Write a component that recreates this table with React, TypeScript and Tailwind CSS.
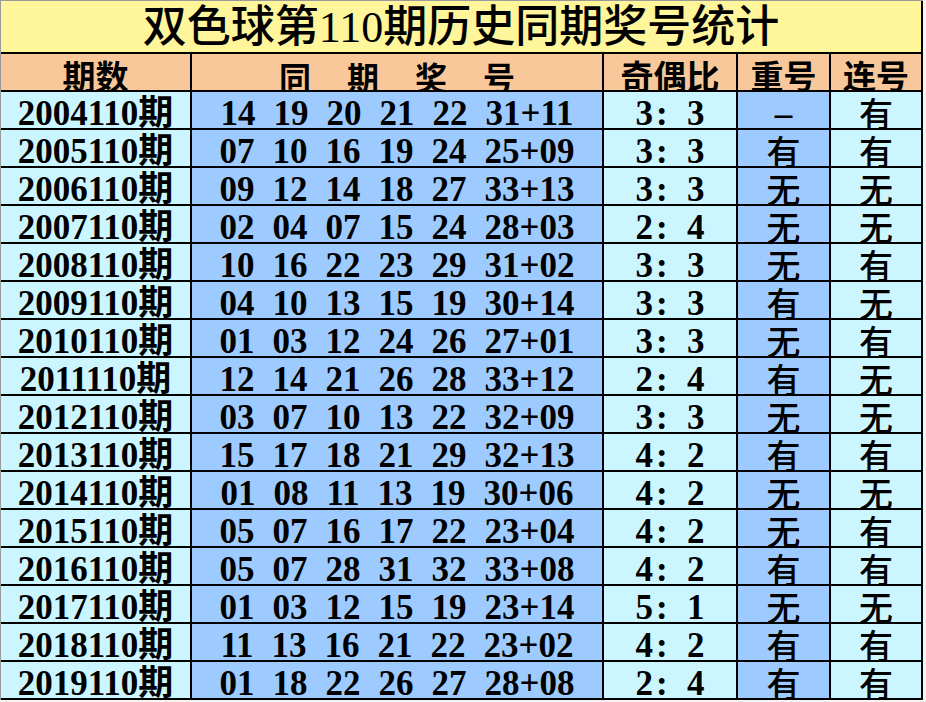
import React from "react";

const rows: [string, string, string, string, string][] = [
  ["2004110期", "14 19 20 21 22 31+11", "3：3", "–", "有"],
  ["2005110期", "07 10 16 19 24 25+09", "3：3", "有", "有"],
  ["2006110期", "09 12 14 18 27 33+13", "3：3", "无", "无"],
  ["2007110期", "02 04 07 15 24 28+03", "2：4", "无", "无"],
  ["2008110期", "10 16 22 23 29 31+02", "3：3", "无", "有"],
  ["2009110期", "04 10 13 15 19 30+14", "3：3", "有", "无"],
  ["2010110期", "01 03 12 24 26 27+01", "3：3", "无", "有"],
  ["2011110期", "12 14 21 26 28 33+12", "2：4", "有", "无"],
  ["2012110期", "03 07 10 13 22 32+09", "3：3", "无", "无"],
  ["2013110期", "15 17 18 21 29 32+13", "4：2", "有", "有"],
  ["2014110期", "01 08 11 13 19 30+06", "4：2", "无", "无"],
  ["2015110期", "05 07 16 17 22 23+04", "4：2", "无", "有"],
  ["2016110期", "05 07 28 31 32 33+08", "4：2", "有", "有"],
  ["2017110期", "01 03 12 15 19 23+14", "5：1", "无", "无"],
  ["2018110期", "11 13 16 21 22 23+02", "4：2", "有", "有"],
  ["2019110期", "01 18 22 26 27 28+08", "2：4", "有", "有"],
];

const font = "font-['Liberation_Serif','Noto_Sans_CJK_SC',serif]";
const cjk = "font-['Noto_Sans_CJK_SC',sans-serif]";

function Ratio({ v }: { v: string }) {
  const [a, b] = v.split("：");
  return (
    <span className="flex items-center">
      <span>{a}</span>
      <span className="inline-block w-[34px] pl-[3px] text-left">:</span>
      <span>{b}</span>
    </span>
  );
}

export default function App() {
  return (
    <div className="w-[926px] h-[702px] overflow-hidden bg-[#f4f4f4]">
      <div className="w-[923px] border-l border-t border-[#9a9a9a] bg-white">
        <div className="h-[53px] bg-[#fff59b] border-b-2 border-black border-r-2 flex items-center justify-center">
          <span className={`${font} text-[44px] font-medium leading-none text-black mt-[3px]`}>
            双色球第110期历史同期奖号统计
          </span>
        </div>
        <div className="grid grid-cols-[191px_412px_134px_93px_92px] h-[38px] bg-[#f9c89a] border-b-2 border-black text-black">
          <div className={`border-r-2 border-black flex justify-center overflow-hidden ${cjk} font-bold text-[33px] leading-[33px] pt-[5px]`}>
            期数
          </div>
          <div className={`border-r-2 border-black flex justify-center gap-[36px] overflow-hidden ${cjk} font-bold text-[32px] leading-[32px] pt-[6px]`}>
            <span>同</span>
            <span>期</span>
            <span>奖</span>
            <span>号</span>
          </div>
          <div className={`border-r-2 border-black flex justify-center overflow-hidden ${cjk} font-bold text-[33px] leading-[33px] pt-[5px]`}>
            奇偶比
          </div>
          <div className={`border-r-2 border-black flex justify-center overflow-hidden ${cjk} font-bold text-[33px] leading-[33px] pt-[5px]`}>
            重号
          </div>
          <div className={`border-r-2 border-black flex justify-center overflow-hidden ${cjk} font-bold text-[33px] leading-[33px] pt-[5px]`}>
            连号
          </div>
        </div>
        {rows.map((r) => {
          const nums = r[1].split(" ");
          return (
            <div
              key={r[0]}
              className={`grid grid-cols-[191px_412px_134px_93px_92px] h-[38px] border-b-2 border-black text-black ${font} font-bold text-[35px] leading-[36px]`}
            >
              <div className="bg-[#ccf6ff] border-r-2 border-black flex justify-center items-center overflow-hidden pt-[7px]">
                {r[0]}
              </div>
              <div className="bg-[#9ecbff] border-r-2 border-black flex justify-center items-center gap-[18px] overflow-hidden pt-[8px]">
                {nums.map((n, i) => (
                  <span key={i}>{n}</span>
                ))}
              </div>
              <div className="bg-[#ccf6ff] border-r-2 border-black flex justify-center items-center overflow-hidden pt-[8px]">
                <Ratio v={r[2]} />
              </div>
              <div className={`bg-[#9ecbff] border-r-2 border-black flex justify-center items-center overflow-hidden ${r[3] === "–" ? "pt-[8px]" : `${cjk} font-medium text-[34px] pt-[6px]`}`}>
                {r[3]}
              </div>
              <div className={`bg-[#ccf6ff] border-r-2 border-black flex justify-center items-center overflow-hidden pt-[6px] ${cjk} font-medium text-[34px]`}>
                {r[4]}
              </div>
            </div>
          );
        })}
      </div>
    </div>
  );
}
